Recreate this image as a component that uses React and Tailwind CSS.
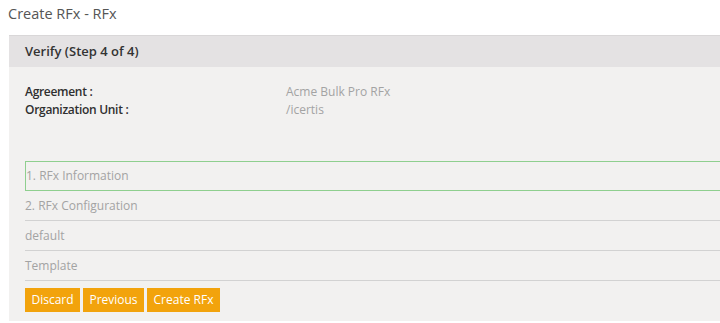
export default function App() {
  const font = { fontFamily: '"Open Sans", "Noto Sans", sans-serif' };
  return (
    <div className="w-[720px] h-[323px] overflow-hidden bg-white" style={font}>
      <div className="h-[35px] pl-[8px] pt-[4px] text-[14.5px] leading-[20px] text-[#555555]">Create RFx - RFx</div>
      <div className="ml-[9px] w-[740px] h-[286px] bg-[#f2f1f0]">
        <div className="h-[32px] bg-[#e4e2e3] border-t border-[#d9d7d8] px-[16px] flex items-center text-[13px] font-semibold text-[#333333]">
          Verify (Step 4 of 4)
        </div>
        <div className="px-[16px] pt-[16px]">
          <div className="flex text-[12px] leading-[18px]">
            <div className="w-[261px] font-semibold tracking-[-0.3px] text-[#2f2f2f]">Agreement :</div>
            <div className="text-[#a3a3a3]">Acme Bulk Pro RFx</div>
          </div>
          <div className="flex text-[12px] leading-[18px]">
            <div className="w-[261px] font-semibold tracking-[-0.3px] text-[#2f2f2f]">Organization Unit :</div>
            <div className="text-[#a3a3a3]">/icertis</div>
          </div>
          <div className="mt-[42px] text-[12px] text-[#a3a3a3]">
            <div className="h-[30px] border border-[#8fcf8f] flex items-center">1. RFx Information</div>
            <div className="h-[30px] border-b border-[#d2d2d2] flex items-center">2. RFx Configuration</div>
            <div className="h-[30px] border-b border-[#d2d2d2] flex items-center">default</div>
            <div className="h-[30px] border-b border-[#d2d2d2] flex items-center">Template</div>
          </div>
          <div className="mt-[7px] flex gap-[3px] text-[12px] text-white">
            <button className="h-[24px] w-[55px] bg-[#f2a30c]">Discard</button>
            <button className="h-[24px] w-[61px] bg-[#f2a30c]">Previous</button>
            <button className="h-[24px] w-[73px] bg-[#f2a30c]">Create RFx</button>
          </div>
        </div>
      </div>
    </div>
  );
}
